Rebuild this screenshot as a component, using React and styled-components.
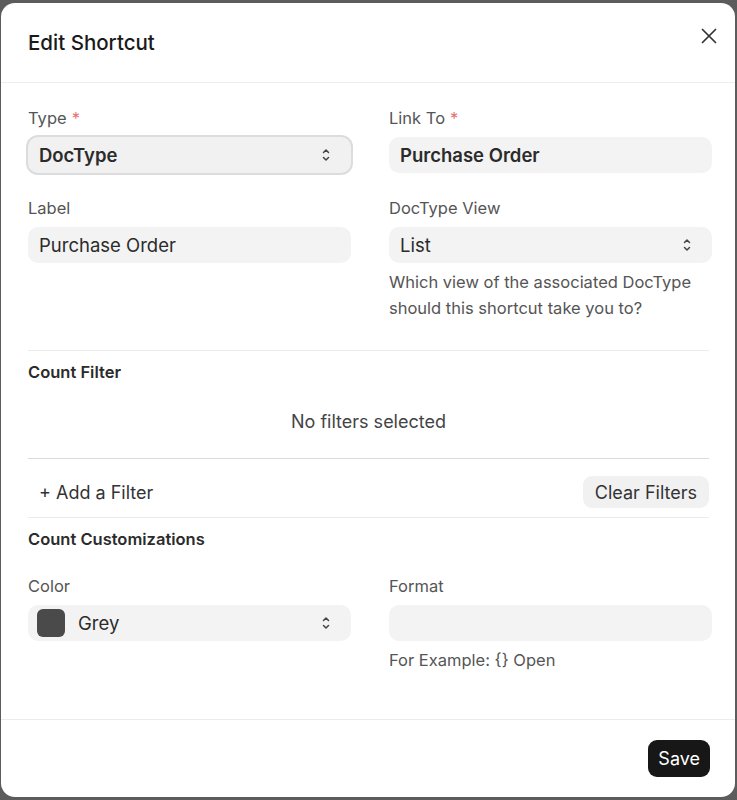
import React from 'react';
import styled, { createGlobalStyle } from 'styled-components';

const GlobalStyle = createGlobalStyle`
  html, body { margin: 0; padding: 0; }
  body {
    background: #5c5c5c;
    font-family: Inter, "Noto Sans", sans-serif;
    color: #1f1f1f;
  }
`;

const Overlay = styled.div`
  width: 737px;
  height: 800px;
  padding: 3px 2px 3px 1px;
  box-sizing: border-box;
  display: flex;
`;

const Modal = styled.div`
  flex: 1;
  background: #fff;
  border-radius: 14px;
  display: flex;
  flex-direction: column;
  overflow: hidden;
`;

const Header = styled.div`
  height: 80px;
  flex: none;
  display: flex;
  align-items: center;
  justify-content: space-between;
  padding: 0 14px 0 27px;
  box-sizing: border-box;
  border-bottom: 1px solid #ededed;
`;

const Title = styled.h2`
  margin: 0;
  font-size: 20.5px;
  font-weight: 500;
  color: #1a1a1a;
`;

const CloseButton = styled.button`
  border: 0;
  background: none;
  padding: 4px;
  display: flex;
  color: #333;
  margin-top: -14px;
`;

const Body = styled.div`
  flex: 1;
  padding: 25px 26px 0 27px;
`;

const Grid = styled.div`
  display: grid;
  grid-template-columns: 323px 323px;
  column-gap: 38px;
  row-gap: 25px;
  align-items: start;
`;

const Field = styled.div`
  display: flex;
  flex-direction: column;
`;

const Label = styled.label`
  font-size: 16.5px;
  line-height: 20px;
  color: #555;
  margin-bottom: 9px;
  span { color: #e57373; margin-left: 5px; }
`;

const Control = styled.div`
  height: 36px;
  box-sizing: border-box;
  background: #f3f3f3;
  border-radius: 10px;
  display: flex;
  align-items: center;
  gap: 12px;
  padding: 0 20px 0 10px;
  font-size: 18.5px;
  font-weight: ${p => (p.$bold ? 600 : 400)};
  color: #2b2b2b;
  ${p => p.$focused && `
    box-shadow: 0 0 0 2px #dcdcdc;
    background: #f1f1f1;
  `}
`;

const Value = styled.div`
  flex: 1;
  padding-left: 1px;
`;

const Swatch = styled.div`
  width: 28px;
  height: 28px;
  border-radius: 6px;
  background: #4a4a4a;
  margin-left: -1px;
`;

const Hint = styled.p`
  margin: 6px 0 0;
  font-size: 16.5px;
  line-height: 26px;
  color: #555;
`;

const Divider = styled.hr`
  border: 0;
  border-top: 1px solid ${p => (p.$strong ? '#dadada' : '#ececec')};
  margin: ${p => p.$m || '0'};
`;

const SectionTitle = styled.h3`
  margin: 0;
  font-size: 16.5px;
  line-height: 20px;
  font-weight: 600;
  color: #2b2b2b;
`;

const Empty = styled.div`
  text-align: center;
  font-size: 18px;
  line-height: 22px;
  color: #444;
  margin: 29px 0 25px;
`;

const FilterBar = styled.div`
  display: flex;
  align-items: center;
  justify-content: space-between;
  padding: 8px 0 0 11px;
  box-sizing: border-box;
  height: 58px;
`;

const TextButton = styled.button`
  border: 0;
  background: ${p => (p.$filled ? '#f1f1f1' : 'transparent')};
  font-family: inherit;
  font-size: 18px;
  color: #333;
  height: 32px;
  padding: 0 ${p => (p.$filled ? '12px' : '0')};
  border-radius: 9px;
`;

const Footer = styled.div`
  flex: none;
  height: 77px;
  border-top: 1px solid #ececec;
  display: flex;
  align-items: center;
  justify-content: flex-end;
  padding: 0 25px 0 0;
`;

const PrimaryButton = styled.button`
  border: 0;
  background: #171717;
  color: #fff;
  font-family: inherit;
  font-size: 18px;
  height: 37px;
  padding: 0 10px;
  border-radius: 9px;
`;

const Chevrons = () => (
  <svg width="10" height="16" viewBox="0 0 10 16" fill="none" stroke="#444" strokeWidth="1.5" strokeLinecap="round" strokeLinejoin="round">
    <path d="M2.5 5.5L5 3l2.5 2.5" />
    <path d="M2.5 10.5L5 13l2.5-2.5" />
  </svg>
);

const CloseIcon = () => (
  <svg width="16" height="16" viewBox="0 0 16 16" fill="none" stroke="#333" strokeWidth="1.7" strokeLinecap="round">
    <path d="M1.5 1.5l13 13M14.5 1.5l-13 13" />
  </svg>
);

const Select = ({ children, ...rest }) => (
  <Control {...rest}>
    {children}
    <Chevrons />
  </Control>
);

export default function App() {
  return (
    <>
      <GlobalStyle />
      <Overlay>
        <Modal>
          <Header>
            <Title>Edit Shortcut</Title>
            <CloseButton aria-label="Close"><CloseIcon /></CloseButton>
          </Header>
          <Body>
            <Grid>
              <Field>
                <Label>Type<span>*</span></Label>
                <Select $bold $focused><Value>DocType</Value></Select>
              </Field>
              <Field>
                <Label>Link To<span>*</span></Label>
                <Control $bold><Value>Purchase Order</Value></Control>
              </Field>
              <Field>
                <Label>Label</Label>
                <Control><Value>Purchase Order</Value></Control>
              </Field>
              <Field>
                <Label>DocType View</Label>
                <Select><Value>List</Value></Select>
                <Hint>Which view of the associated DocType should this shortcut take you to?</Hint>
              </Field>
            </Grid>

            <Divider $m="29px 0 0" />
            <SectionTitle style={{ marginTop: 11 }}>Count Filter</SectionTitle>
            <Empty>No filters selected</Empty>
            <Divider $strong />
            <FilterBar>
              <TextButton>+ Add a Filter</TextButton>
              <TextButton $filled>Clear Filters</TextButton>
            </FilterBar>
            <Divider />
            <SectionTitle style={{ marginTop: 11 }}>Count Customizations</SectionTitle>

            <Grid style={{ marginTop: 27 }}>
              <Field>
                <Label>Color</Label>
                <Select><Swatch /><Value>Grey</Value></Select>
              </Field>
              <Field>
                <Label>Format</Label>
                <Control />
                <Hint style={{ marginTop: 6 }}>For Example: {'{}'} Open</Hint>
              </Field>
            </Grid>
          </Body>
          <Footer>
            <PrimaryButton>Save</PrimaryButton>
          </Footer>
        </Modal>
      </Overlay>
    </>
  );
}
